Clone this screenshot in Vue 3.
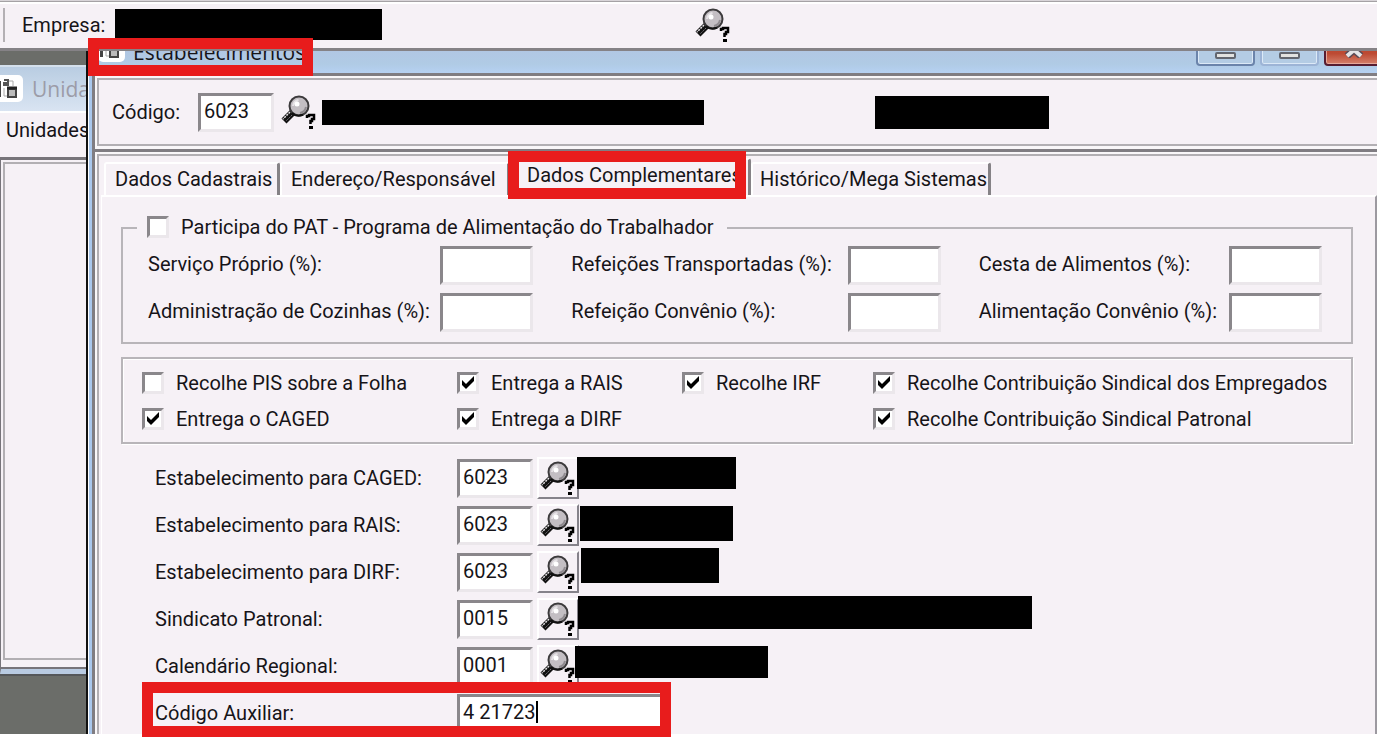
<script setup>
import { ref, h } from 'vue'

const SearchIcon = () =>
  h('svg', { viewBox: '0 0 36 36', width: 36, height: 36, 'aria-hidden': 'true' }, [
    h('path', { d: 'M12 18 L3 27', stroke: '#111', 'stroke-width': 7 }),
    h('path', { d: 'M9 18 L2 25', stroke: '#e8e4e8', 'stroke-width': 1.5, 'stroke-dasharray': '2 1' }),
    h('path', { d: 'M11 21 L5 27', stroke: '#77727a', 'stroke-width': 1, 'stroke-dasharray': '2 1' }),
    h('circle', { cx: 18, cy: 12, r: 9.5, fill: '#c3bec3', stroke: '#3c3a3c', 'stroke-width': 2 }),
    h('path', { d: 'M11 19 A9.500 9.500 0 0 0 22 20.500', fill: 'none', stroke: '#111', 'stroke-width': 2 }),
    h('path', { d: 'M19 19 A7.500 7.500 0 0 0 25 13', fill: 'none', stroke: '#8f8a8f', 'stroke-width': 2 }),
    h('path', { d: 'M12 12 Q12.500 7 17.500 6', fill: 'none', stroke: '#e6e2e6', 'stroke-width': 2 }),
    h('circle', { cx: 16, cy: 10, r: 2.5, fill: '#fff' }),
    h('path', { d: 'M26 24 V22 H28 V21 H33 V25 H31 V27 H29.500 V30', fill: 'none', stroke: '#000', 'stroke-width': 2.5 }),
    h('rect', { x: 28, y: 32, width: 4, height: 3, fill: '#000' })
  ])

const WindowIcon = () =>
  h('svg', { viewBox: '0 0 28 28', width: 28, height: 28, 'aria-hidden': 'true' }, [
    h('rect', { x: 0, y: 0, width: 27, height: 27, rx: 5, fill: '#fff' }),
    h('path', { d: 'M2 22 V6 H5 V22 Z', fill: '#444' }),
    h('path', { d: 'M8 5 H12 V10 H8 V8 H11', fill: 'none', stroke: '#555', 'stroke-width': 2 }),
    h('path', { d: 'M13 6 H17 V11 M8 13 V21 H13', fill: 'none', stroke: '#aaa', 'stroke-width': 1 }),
    h('rect', { x: 12, y: 14, width: 8, height: 8, fill: '#bbb', stroke: '#444', 'stroke-width': 2 }),
    h('path', { d: 'M11 13 H21', stroke: '#222', 'stroke-width': 3 })
  ])

const tabs = ['Dados Cadastrais', 'Endereço/Responsável', 'Dados Complementares', 'Histórico/Mega Sistemas']
const active = ref(2)
const pat = ref(false)

const percents = ref([
  { label: 'Serviço Próprio (%):', value: '' },
  { label: 'Refeições Transportadas (%):', value: '' },
  { label: 'Cesta de Alimentos (%):', value: '' },
  { label: 'Administração de Cozinhas (%):', value: '' },
  { label: 'Refeição Convênio (%):', value: '' },
  { label: 'Alimentação Convênio (%):', value: '' }
])

const checks = ref([
  { label: 'Recolhe PIS sobre a Folha', col: 1, on: false },
  { label: 'Entrega a RAIS', col: 2, on: true },
  { label: 'Recolhe IRF', col: 3, on: true },
  { label: 'Recolhe Contribuição Sindical dos Empregados', col: 4, on: true },
  { label: 'Entrega o CAGED', col: 1, on: true },
  { label: 'Entrega a DIRF', col: 2, on: true },
  { label: 'Recolhe Contribuição Sindical Patronal', col: 4, on: true }
])

const lookups = ref([
  { label: 'Estabelecimento para CAGED:', value: '6023', bar: { x: 422, y: 0, w: 159, h: 32 } },
  { label: 'Estabelecimento para RAIS:', value: '6023', bar: { x: 425, y: 2, w: 153, h: 35 } },
  { label: 'Estabelecimento para DIRF:', value: '6023', bar: { x: 426, y: -3, w: 138, h: 35 } },
  { label: 'Sindicato Patronal:', value: '0015', bar: { x: 423, y: -2, w: 454, h: 33 } },
  { label: 'Calendário Regional:', value: '0001', bar: { x: 420, y: 1, w: 193, h: 32 } }
])
const codigo = ref('6023')
const auxiliar = ref('4 21723')

const barStyle = (b) => ({ left: b.x + 'px', top: b.y + 'px', width: b.w + 'px', height: b.h + 'px' })
</script>

<template>
  <div class="screen">
    <header class="company">
      <span class="grip"></span>
      <span class="company-label">Empresa:</span>
      <span class="mask mask-company"></span>
      <button class="flat company-search" aria-label="Pesquisar empresa"><SearchIcon /></button>
    </header>

    <main class="desktop">
      <section class="back-window">
        <div class="back-title"><WindowIcon /><span>Unidades</span></div>
        <div class="back-menu">Unidades</div>
        <div class="back-body"><div class="back-inner"></div></div>
      </section>

      <section class="window">
        <div class="titlebar">
          <WindowIcon />
          <h1>Estabelecimentos</h1>
          <div class="controls">
            <button class="ctl" aria-label="Minimizar"><i></i></button>
            <button class="ctl pale" aria-label="Maximizar"><i></i></button>
            <button class="ctl close" aria-label="Fechar">
              <svg viewBox="0 0 20 16" width="20" height="16"><path d="M3 2 L17 14 M17 2 L3 14" stroke="#5a4a55" stroke-width="7" /><path d="M3 2 L17 14 M17 2 L3 14" stroke="#e4e4e6" stroke-width="4" /></svg>
            </button>
          </div>
        </div>
        <span class="mark mark-title"></span>

        <div class="panel">
          <div class="panel-in code-row">
            <label for="codigo">Código:</label>
            <input id="codigo" v-model="codigo" class="box code" />
            <button class="flat" aria-label="Pesquisar código"><SearchIcon /></button>
            <span class="mask mask-name"></span>
            <span class="mask mask-id"></span>
          </div>
        </div>

        <div class="panel grow">
          <div class="panel-in tabs-panel">
            <div class="tabs" role="tablist">
              <button
                v-for="(t, i) in tabs"
                :key="t"
                class="tab"
                :class="['tab-' + i, { active: active === i }]"
                role="tab"
                :aria-selected="active === i"
                @click="active = i"
              >{{ t }}<span v-if="i === 2" class="mark mark-tab"></span></button>
            </div>

            <div class="pane">
              <fieldset class="group pat">
                <legend>
                  <label class="check"><input v-model="pat" type="checkbox" />Participa do PAT - Programa de Alimentação do Trabalhador</label>
                </legend>
                <div class="percents">
                  <div v-for="(p, i) in percents" :key="p.label" class="percent">
                    <label :for="'p' + i">{{ p.label }}</label>
                    <input :id="'p' + i" v-model="p.value" class="box" />
                  </div>
                </div>
              </fieldset>

              <div class="group checks">
                <label v-for="c in checks" :key="c.label" class="check" :class="'col-' + c.col">
                  <input v-model="c.on" type="checkbox" />{{ c.label }}
                </label>
              </div>

              <div class="lookups">
                <div v-for="(l, i) in lookups" :key="l.label" class="lookup">
                  <label :for="'l' + i">{{ l.label }}</label>
                  <input :id="'l' + i" v-model="l.value" class="box code" />
                  <button class="raised" :aria-label="'Pesquisar ' + l.label"><SearchIcon /></button>
                  <span class="mask mask-over" :style="barStyle(l.bar)"></span>
                </div>
                <div class="lookup">
                  <label for="aux">Código Auxiliar:</label>
                  <input id="aux" v-model="auxiliar" class="box aux" />
                  <span class="caret"></span>
                  <span class="mark mark-aux"></span>
                </div>
              </div>
            </div>
          </div>
        </div>
      </section>
    </main>
  </div>
</template>

<style>
body {
  margin: 0;
  background: #fff;
}
</style>

<style scoped>
* {
  box-sizing: border-box;
}
.screen {
  display: flex;
  flex-direction: column;
  min-height: 100vh;
  padding-bottom: 4px;
  overflow: hidden;
  color: #161418;
  font: 20px/24px Roboto, sans-serif;
  white-space: nowrap;
}
button,
input {
  font: inherit;
  color: inherit;
}
button {
  padding: 0;
}
svg {
  display: block;
  flex: none;
}
.company {
  display: flex;
  align-items: center;
  height: 51px;
  border-top: 1px solid #d8d4d8;
  border-bottom: 3px solid #858286;
  background: #f6f1f6;
  box-shadow: inset 0 1px #a5a2a5, inset 0 3px #fff;
}
.grip {
  width: 2px;
  height: 34px;
  margin-left: 3px;
  background: #b4b0b4;
}
.company-label {
  width: 93px;
  padding-left: 17px;
}
.mask {
  flex: none;
  background: #000;
}
.mask-company {
  width: 267px;
  height: 31px;
}
.company-label + .mask-company {
  margin-left: 17px;
}
.flat {
  border: 0;
  background: none;
}
.company-search {
  margin-left: 313px;
}
.desktop {
  display: grid;
  grid-template-columns: 86px 1fr;
  flex: 1;
  background: #6b6d69;
}
.back-window {
  display: flex;
  flex-direction: column;
  margin: 14px 0 58px;
  overflow: hidden;
  border-bottom: 2px solid #55575a;
  background: #f6f1f6;
}
.back-title {
  display: flex;
  align-items: center;
  gap: 8px;
  height: 48px;
  border-top: 2px solid #d4e0ec;
  border-bottom: 2px solid #fff;
  background: linear-gradient(#b9cde2, #d9e4f2);
  color: #9c9ca8;
  font: 21px/24px "Open Sans", sans-serif;
}
.back-title svg {
  margin-left: -4px;
}
.back-menu {
  padding: 5px 0 15px 6px;
}
.back-body {
  display: flex;
  flex: 1;
  padding: 2px 0 9px 2px;
  border: solid #77747a;
  border-width: 3px 0 0 1px;
  border-bottom: 5px solid #b9cbe2;
  box-shadow: inset 0 -2px #77747a;
}
.back-inner {
  flex: 1;
  border: 2px solid #b2afb3;
  border-right: 0;
}
.window {
  position: relative;
  display: flex;
  flex-direction: column;
  padding-left: 4px;
  border-left: 2px solid #111;
  background: linear-gradient(90deg, #fff 1px, #a9c7ec 1px);
}
.titlebar {
  display: flex;
  align-items: flex-end;
  height: 22px;
  padding-left: 6px;
  overflow: hidden;
  background: linear-gradient(#b1c7e3, #b0cbe5 60%, #b6d1f2);
}
.titlebar > svg {
  margin-bottom: 10px;
}
h1 {
  margin: 0 0 7px 7px;
  font: 21px/28px "Open Sans", sans-serif;
}
.controls {
  display: flex;
  gap: 5px;
  margin: 0 -6px 7px auto;
}
.ctl {
  display: flex;
  justify-content: center;
  width: 59px;
  height: 30px;
  padding-top: 14px;
  border: 2px solid #6b84ab;
  border-radius: 4px;
  background: #b4cce4;
  box-shadow: inset 0 0 0 1px #dce9f7;
}
.ctl.pale {
  border-color: #9db4d6;
}
.ctl i {
  width: 21px;
  height: 7px;
  border: 2px solid #62666f;
  border-radius: 2px;
  background: #e2e2e0;
}
.ctl.close {
  padding-top: 4px;
  border-color: #571c30;
  background: linear-gradient(#b8442c, #bd4a33 60%, #d5806b);
  box-shadow: inset 0 0 0 1px #e6a79a;
}
.mark {
  position: absolute;
  z-index: 2;
  border: 11px solid #e81c1c;
  pointer-events: none;
}
.mark-title {
  left: 0;
  top: -13px;
  width: 225px;
  height: 38px;
}
.panel {
  display: flex;
  padding: 2px 0 0 2px;
  border: solid #807d82;
  border-width: 3px 0 0 3px;
  background: #f9f7f9;
}
.panel-in {
  flex: 1;
  border: 2px solid #b2afb3;
  border-right: 0;
  background: #f6f1f6;
}
.code-row {
  display: flex;
  align-items: center;
  height: 68px;
  margin-bottom: 3px;
  padding-left: 13px;
}
.code-row label {
  width: 86px;
}
.box {
  height: 39px;
  min-width: 0;
  padding: 0 3px 3px;
  border: 3px solid;
  border-color: #8a878b #ebe7eb #ebe7eb #8a878b;
  border-radius: 0;
  outline: 0;
  background: #fff;
}
.code {
  width: 76px;
}
.code-row .flat {
  margin-left: 7px;
}
.mask-name {
  width: 382px;
  height: 25px;
  margin-left: 5px;
}
.mask-id {
  width: 174px;
  height: 33px;
  margin-left: 171px;
}
.grow {
  flex: 1;
}
.tabs-panel {
  display: flex;
  flex-direction: column;
  padding-left: 2px;
  border-bottom: 0;
}
.tabs {
  display: flex;
  align-items: flex-end;
  height: 39px;
  padding-left: 3px;
}
.tab {
  position: relative;
  height: 33px;
  padding: 0 0 1px 9px;
  border: solid #fff;
  border-width: 2px 3px 0 2px;
  border-right-color: #858286;
  border-radius: 3px 3px 0 0;
  background: #f6f1f6;
  text-align: left;
}
.tab.active {
  height: 37px;
  padding: 0 0 5px 15px;
}
.tab-0 {
  width: 176px;
}
.tab-1 {
  width: 230px;
}
.tab-2 {
  width: 241px;
}
.tab-3 {
  width: 240px;
  padding-left: 7px;
}
.mark-tab {
  left: -4px;
  top: -9px;
  width: 238px;
  height: 48px;
}
.pane {
  display: flex;
  flex: 1;
  flex-direction: column;
  padding: 18px 22px 0 19px;
  border: solid #fff;
  border-width: 2px 2px 0 1px;
  border-right-color: #9c99a0;
}
.group {
  min-width: 0;
  margin: 0;
  border: 2px solid #b8b5b9;
  box-shadow: 1px 1px #fff, inset 1px 1px #fff;
}
.pat {
  height: 129px;
  padding: 0 29px 0 14px;
  box-shadow: none;
}
legend {
  padding: 0 13px 0 10px;
}
legend .check {
  padding-bottom: 2px;
}
.check {
  display: flex;
  align-items: center;
  gap: 12px;
}
.check input {
  appearance: none;
  flex: none;
  width: 22px;
  height: 22px;
  margin: 0;
  border: 3px solid;
  border-color: #8a878b #ebe7eb #ebe7eb #8a878b;
  background: #fff;
}
.check input:checked::after {
  content: "";
  display: block;
  width: 16px;
  height: 16px;
  background: #000;
  clip-path: polygon(2px 5px, 6px 9px, 14px 1px, 14px 6px, 6px 14px, 2px 10px);
}
.percents {
  display: grid;
  grid-template-columns: 385fr 369fr 343fr;
  gap: 8px 38px;
  padding: 5px 0 0 11px;
}
.percent {
  display: flex;
  align-items: center;
  justify-content: space-between;
}
.percent label {
  padding-bottom: 3px;
}
.percent .box {
  width: 93px;
}
.checks {
  display: grid;
  grid-template-columns: 315fr 225fr 191fr 468fr;
  gap: 12px 0;
  margin-top: 13px;
  padding: 12px 10px 11px 19px;
}
.col-1 {
  grid-column: 1;
}
.col-4 {
  grid-column: 4;
}
.lookups {
  display: flex;
  flex-direction: column;
  gap: 5px;
  margin-top: 13px;
  padding-left: 34px;
}
.lookup {
  position: relative;
  display: flex;
  align-items: center;
  height: 42px;
}
.lookup label {
  width: 302px;
}
.raised {
  display: grid;
  place-items: center;
  width: 42px;
  height: 42px;
  margin-left: 4px;
  border: 2px solid;
  border-color: #fff #85828a #85828a #fff;
  background: #f6f1f6;
}
.mask-over {
  position: absolute;
  z-index: 1;
}
.aux {
  width: 212px;
}
.caret {
  position: absolute;
  left: 381px;
  top: 9px;
  width: 2px;
  height: 22px;
  background: #000;
}
.mark-aux {
  left: -13px;
  top: -10px;
  width: 529px;
  height: 55px;
}
</style>
